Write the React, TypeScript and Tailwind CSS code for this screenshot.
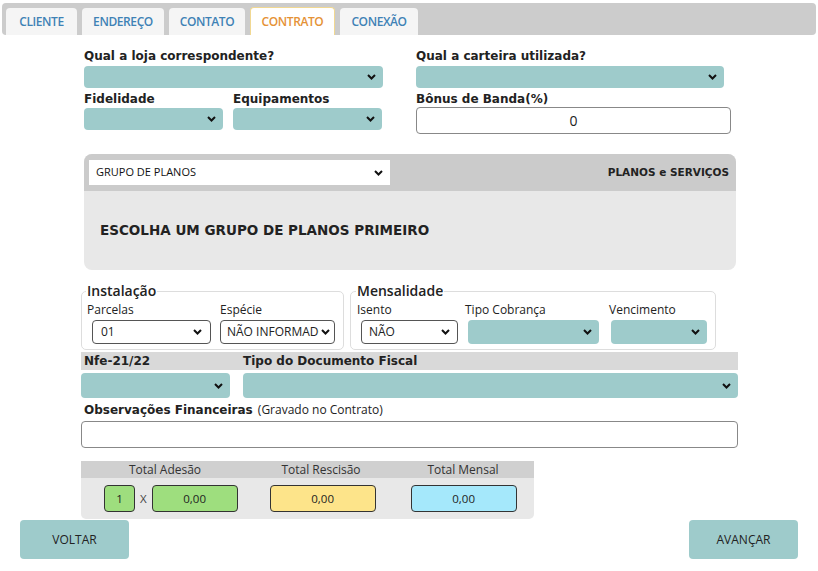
import React from "react";

const Chevron = () => (
  <svg width="9" height="6" viewBox="0 0 9 6" className="shrink-0">
    <path d="M1 1l3.5 3.5L8 1" fill="none" stroke="#111" strokeWidth="2" />
  </svg>
);

const Select = ({ className = "", text = "" }: { className?: string; text?: string }) => (
  <div className={`flex items-center justify-between gap-[2px] ${className}`}>
    <span className="whitespace-nowrap overflow-hidden">{text}</span>
    <Chevron />
  </div>
);

const tabs = [
  { t: "CLIENTE", w: "w-[71px]" },
  { t: "ENDEREÇO", w: "w-[82px]" },
  { t: "CONTATO", w: "w-[76px]" },
  { t: "CONTRATO", w: "w-[85px]" },
  { t: "CONEXÃO", w: "w-[78px]" },
];

export default function App() {
  return (
    <div className="w-[818px] h-[571px] bg-white text-[#222] font-['DejaVu_Sans',sans-serif] overflow-hidden">
      {/* Tabs */}
      <div className="mx-[2px] mt-[3px] h-[32px] bg-[#cccccc] rounded-[4px] flex items-end gap-[5px] pl-[4px]">
        {tabs.map(({ t, w }) =>
          t === "CONTRATO" ? (
            <div
              key={t}
              className={`${w} h-[28px] flex items-center justify-center rounded-t-[4px] bg-white border border-b-0 border-[#f1d892] text-[#e59236] text-[12px] font-['Open_Sans',sans-serif] font-semibold tracking-[-0.4px]`}
            >
              {t}
            </div>
          ) : (
            <div
              key={t}
              className={`${w} h-[27px] flex items-center justify-center rounded-t-[4px] bg-[#f5f5f5] text-[#3f82b5] text-[12px] font-['Open_Sans',sans-serif] font-semibold tracking-[-0.4px]`}
            >
              {t}
            </div>
          )
        )}
      </div>

      <div className="ml-[81px] w-[657px]">
        {/* top fields */}
        <div className="flex mt-[13px]">
          <div className="ml-[3px] w-[300px]">
            <div className="text-[12px] font-bold leading-[16px]">Qual a loja correspondente?</div>
            <Select className="mt-[2px] h-[22px] w-[299px] bg-[#9ecbcb] rounded-[4px] px-[7px]" />
            <div className="flex gap-[10px] mt-[3px]">
              <div className="w-[139px]">
                <div className="text-[12px] font-bold leading-[16px]">Fidelidade</div>
                <Select className="mt-[1px] h-[22px] w-[139px] bg-[#9ecbcb] rounded-[4px] px-[7px]" />
              </div>
              <div className="w-[149px]">
                <div className="text-[12px] font-bold leading-[16px]">Equipamentos</div>
                <Select className="mt-[1px] h-[22px] w-[149px] bg-[#9ecbcb] rounded-[4px] px-[7px]" />
              </div>
            </div>
          </div>
          <div className="ml-[32px] w-[315px]">
            <div className="text-[12px] font-bold leading-[16px]">Qual a carteira utilizada?</div>
            <Select className="mt-[2px] h-[22px] w-[308px] bg-[#9ecbcb] rounded-[4px] px-[7px]" />
            <div className="mt-[3px] text-[12px] font-bold leading-[16px]">Bônus de Banda(%)</div>
            <div className="h-[27px] w-[315px] border border-[#888] rounded-[4px] flex items-center justify-center text-[14px] font-['Open_Sans',sans-serif]">
              0
            </div>
          </div>
        </div>

        {/* Planos panel */}
        <div className="ml-[3px] mt-[20px] w-[652px] h-[116px] rounded-[8px] bg-[#e8e8e8] overflow-hidden">
          <div className="h-[37px] bg-[#cbcbcb] flex items-center justify-between pl-[5px] pr-[7px]">
            <Select
              className="w-[301px] h-[25px] bg-white px-[7px] text-[11px] font-['Open_Sans',sans-serif] text-[#111]"
              text="GRUPO DE PLANOS"
            />
            <span className="text-[10.5px] font-bold">PLANOS e SERVIÇOS</span>
          </div>
          <div className="pl-[16px] pt-[29px] text-[13.5px] font-bold">ESCOLHA UM GRUPO DE PLANOS PRIMEIRO</div>
        </div>

        {/* Fieldsets */}
        <div className="flex mt-[13px] gap-[6px] font-['Open_Sans',sans-serif] text-[12px]">
          <fieldset className="w-[263px] border border-[#ddd] rounded-[5px] px-[5px] pb-[5px]">
            <legend className="px-[1px] text-[14px] font-semibold leading-[16px] -ml-[1px]">Instalação</legend>
            <div className="flex gap-[7px] pt-[3px]">
              <div className="w-[126px]">
                <div className="leading-[16px] mb-[2px]">Parcelas</div>
                <Select className="ml-[5px] w-[119px] h-[24px] border border-[#555] rounded-[4px] px-[8px]" text="01" />
              </div>
              <div className="w-[117px]">
                <div className="leading-[16px] mb-[2px]">Espécie</div>
                <Select className="w-[115px] h-[24px] border border-[#555] rounded-[4px] pl-[6px] pr-[4px]" text="NÃO INFORMADO" />
              </div>
            </div>
          </fieldset>
          <fieldset className="w-[364px] border border-[#ddd] rounded-[5px] px-[6px] pb-[5px]">
            <legend className="px-[1px] text-[14px] font-semibold leading-[16px] -ml-[1px]">Mensalidade</legend>
            <div className="flex pt-[3px]">
              <div className="w-[108px]">
                <div className="leading-[16px] mb-[2px]">Isento</div>
                <Select className="ml-[4px] w-[97px] h-[24px] border border-[#555] rounded-[4px] px-[7px]" text="NÃO" />
              </div>
              <div className="w-[144px]">
                <div className="leading-[16px] mb-[2px]">Tipo Cobrança</div>
                <Select className="ml-[3px] w-[131px] h-[24px] bg-[#9ecbcb] rounded-[4px] px-[7px]" />
              </div>
              <div className="w-[100px]">
                <div className="leading-[16px] mb-[2px]">Vencimento</div>
                <Select className="ml-[2px] w-[96px] h-[24px] bg-[#9ecbcb] rounded-[4px] px-[7px]" />
              </div>
            </div>
          </fieldset>
        </div>

        {/* Nfe */}
        <div className="mt-[2px] h-[18px] bg-[#d9d9d9] flex items-center text-[12px] font-bold">
          <span className="ml-[3px] w-[159px]">Nfe-21/22</span>
          <span>Tipo do Documento Fiscal</span>
        </div>
        <div className="flex mt-[3px] gap-[13px]">
          <Select className="w-[149px] h-[25px] bg-[#9ecbcb] rounded-[4px] px-[7px]" />
          <Select className="flex-1 h-[25px] bg-[#9ecbcb] rounded-[4px] px-[7px]" />
        </div>

        <div className="mt-[3px] ml-[3px] leading-[16px]">
          <span className="text-[12px] font-bold">Observações Financeiras</span>{" "}
          <span className="text-[12px] font-['Open_Sans',sans-serif]">(Gravado no Contrato)</span>
        </div>
        <div className="mt-[3px] h-[27px] w-[657px] border border-[#888] rounded-[4px]" />

        {/* Totais */}
        <div className="mt-[13px] w-[453px] h-[58px] bg-[#e8e8e8] rounded-b-[5px] font-['Open_Sans',sans-serif] text-[12px]">
          <div className="h-[17px] bg-[#d0d0d0] flex items-center text-[#333]">
            <span className="w-[168px] text-center">Total Adesão</span>
            <span className="w-[144px] text-center">Total Rescisão</span>
            <span className="w-[140px] text-center">Total Mensal</span>
          </div>
          <div className="flex items-center mt-[7px] text-[11.5px]">
            <div className="ml-[23px] w-[31px] h-[27px] bg-[#9ede7e] border border-[#333] rounded-[4px] flex items-center justify-center">1</div>
            <span className="ml-[5px] text-[#444]">X</span>
            <div className="ml-[5px] w-[86px] h-[27px] bg-[#9ede7e] border border-[#333] rounded-[4px] flex items-center justify-center">0,00</div>
            <div className="ml-[32px] w-[106px] h-[27px] bg-[#fde48a] border border-[#333] rounded-[4px] flex items-center justify-center">0,00</div>
            <div className="ml-[35px] w-[106px] h-[27px] bg-[#a5e8fb] border border-[#333] rounded-[4px] flex items-center justify-center">0,00</div>
          </div>
        </div>
      </div>

      {/* Buttons */}
      <div className="flex justify-between pl-[20px] pr-[20px] mt-[1px] font-['Open_Sans',sans-serif] text-[12px] text-[#222]">
        <div className="w-[109px] h-[39px] bg-[#9ecbcb] rounded-[4px] flex items-center justify-center">VOLTAR</div>
        <div className="w-[109px] h-[39px] bg-[#9ecbcb] rounded-[4px] flex items-center justify-center">AVANÇAR</div>
      </div>
    </div>
  );
}
